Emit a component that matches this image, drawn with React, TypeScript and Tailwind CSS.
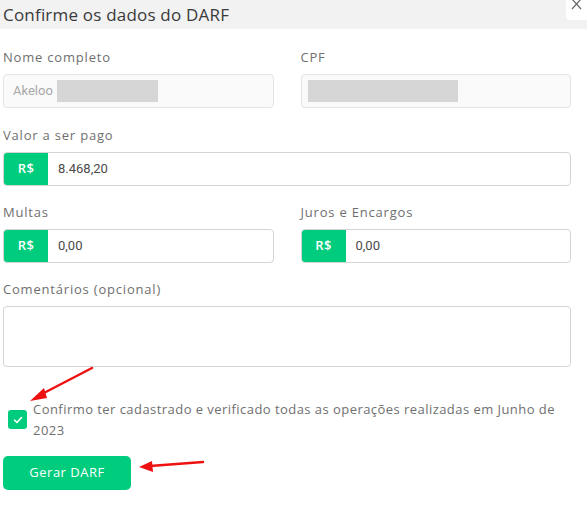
import React from "react";

const FONT = "font-['Open_Sans',sans-serif]";
const INPUT_FONT = "font-['Roboto','Liberation_Sans',sans-serif]";

function Label({ children }: { children: React.ReactNode }) {
  return <p className="mb-[8px] text-[13px] leading-[18px] tracking-[0.8px] text-[#6f6f6f]">{children}</p>;
}

function MoneyInput({ value }: { value: string }) {
  return (
    <div className="flex h-[34px] overflow-hidden rounded-[4px] border border-[#d4d4d4] bg-white">
      <div className="flex w-[44px] shrink-0 items-center justify-center bg-[#00cc7d] text-[13px] font-semibold tracking-[0.5px] text-white">
        R$
      </div>
      <div className={`flex items-center pl-[10px] text-[13px] text-[#4a4a4a] ${INPUT_FONT}`}>{value}</div>
    </div>
  );
}

function ReadonlyInput({ prefix, block }: { prefix?: string; block: number }) {
  return (
    <div className="flex h-[34px] items-center gap-[4px] rounded-[4px] border border-[#e4e4e4] bg-[#fafafa] px-[6px]">
      {prefix && <span className={`pl-[3px] text-[13px] text-[#a8a8a8] ${INPUT_FONT}`}>{prefix}</span>}
      <span className="h-[22px] bg-[#d6d6d6]" style={{ width: block }} />
    </div>
  );
}

export default function App() {
  return (
    <div className={`relative h-[505px] w-[587px] overflow-hidden bg-white ${FONT}`}>
      <div className="flex h-[29px] items-center bg-[#f2f2f2] pl-[3px]">
        <h1 className="text-[17px] tracking-[0.2px] text-[#3a3a3a]">Confirme os dados do DARF</h1>
      </div>
      <div className="absolute right-0 top-0 flex h-[20px] w-[21px] justify-center rounded-bl-[4px] bg-white">
        <svg width="11" height="10" viewBox="0 0 11 10" fill="none">
          <path d="M1 -1 L10 9 M10 -1 L1 9" stroke="#666" strokeWidth="1.2" />
        </svg>
      </div>

      <div className="px-[3px] pr-[16px] pt-[19px]">
        <div className="grid grid-cols-2 gap-x-[27px]">
          <div>
            <Label>Nome completo</Label>
            <ReadonlyInput prefix="Akeloo" block={101} />
          </div>
          <div>
            <Label>CPF</Label>
            <ReadonlyInput block={150} />
          </div>
        </div>

        <div className="mt-[18px]">
          <Label>Valor a ser pago</Label>
          <MoneyInput value="8.468,20" />
        </div>

        <div className="mt-[17px] grid grid-cols-2 gap-x-[27px]">
          <div>
            <Label>Multas</Label>
            <MoneyInput value="0,00" />
          </div>
          <div>
            <Label>Juros e Encargos</Label>
            <MoneyInput value="0,00" />
          </div>
        </div>

        <div className="mt-[17px]">
          <Label>Comentários (opcional)</Label>
          <div className="h-[61px] rounded-[4px] border border-[#d4d4d4] bg-white" />
        </div>

        <div className="mt-[32px] flex items-start gap-[6px] pl-[5px]">
          <div className="mt-[11px] flex h-[19px] w-[19px] shrink-0 items-center justify-center rounded-[3px] bg-[#00cc7d]">
            <svg width="10" height="8" viewBox="0 0 10 8" fill="none">
              <path d="M1.5 4.2 L4 6.5 L8.5 1.5" stroke="white" strokeWidth="1.6" strokeLinecap="round" strokeLinejoin="round" />
            </svg>
          </div>
          <p className="text-[13px] leading-[21px] tracking-[0.45px] text-[#6f6f6f]">
            Confirmo ter cadastrado e verificado todas as operações realizadas em Junho de 2023
          </p>
        </div>

        <button className="mt-[15px] h-[34px] w-[128px] rounded-[5px] bg-[#00cc7d] text-[13px] font-medium tracking-[0.5px] text-white">
          Gerar DARF
        </button>
      </div>

      <svg className="pointer-events-none absolute left-0 top-0" width="587" height="505">
        <line x1="92" y1="368" x2="40" y2="395" stroke="#ee1111" strokeWidth="2.5" strokeLinecap="round" />
        <polygon points="30,401 44,388 47,398" fill="#ee1111" />
        <line x1="203" y1="462" x2="150" y2="466" stroke="#ee1111" strokeWidth="2.5" strokeLinecap="round" />
        <polygon points="139,467 152,461 153,472" fill="#ee1111" />
      </svg>
    </div>
  );
}
